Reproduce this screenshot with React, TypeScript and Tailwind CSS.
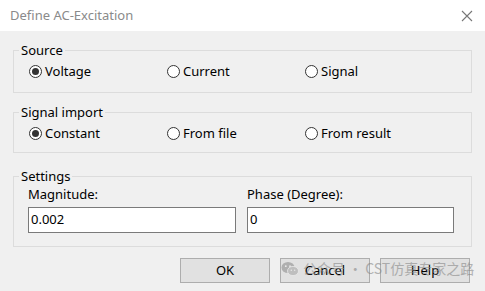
import React from "react";

const font = { fontFamily: '"Noto Sans", "Open Sans", sans-serif' };

function Radio({ label, checked }: { label: string; checked?: boolean }) {
  return (
    <div className="flex items-center h-[18px]">
      <span className="w-[13px] h-[13px] rounded-full border border-[#333] bg-white flex items-center justify-center shrink-0">
        {checked && <span className="w-[7px] h-[7px] rounded-full bg-[#333]" />}
      </span>
      <span className="ml-[3px] text-[13px] text-black leading-[18px]">{label}</span>
    </div>
  );
}

function Group({ title, children, className }: { title: string; children: React.ReactNode; className?: string }) {
  return (
    <fieldset className={"border border-[#dcdcdc] mx-[13px] " + (className ?? "")}>
      <legend className="ml-[5px] px-[2px] text-[13px] leading-[18px] text-black">{title}</legend>
      {children}
    </fieldset>
  );
}

function Btn({ label, w }: { label: string; w: string }) {
  return (
    <div className={"h-[25px] border border-[#adadad] bg-[#e1e1e1] flex items-center justify-center text-[13px] text-black " + w}>
      {label}
    </div>
  );
}

export default function App() {
  return (
    <div className="relative w-[485px] h-[291px] bg-[#f0f0f0] overflow-hidden flex flex-col" style={font}>
      <div className="h-[31px] bg-white flex items-center justify-between pl-[10px] pr-[9px] shrink-0">
        <span className="text-[13px] text-[#8a8a8a]">Define AC-Excitation</span>
        <svg width="12" height="12" viewBox="0 0 12 12" className="mr-[3px]">
          <path d="M1 1 L11 11 M11 1 L1 11" stroke="#777" strokeWidth="1.1" fill="none" />
        </svg>
      </div>

      <Group title="Source" className="mt-[10px] pb-[12px] pt-[3px]">
        <div className="grid grid-cols-[138px_138px_138px] pl-[15px]">
          <Radio label="Voltage" checked />
          <Radio label="Current" />
          <Radio label="Signal" />
        </div>
      </Group>

      <Group title="Signal import" className="mt-[10px] pb-[10px] pt-[3px]">
        <div className="grid grid-cols-[138px_138px_138px] pl-[15px]">
          <Radio label="Constant" checked />
          <Radio label="From file" />
          <Radio label="From result" />
        </div>
      </Group>

      <Group title="Settings" className="mt-[14px] pb-[13px]">
        <div className="grid grid-cols-[208px_207px] gap-x-[11px] pl-[14px] pr-[16px]">
          <div className="flex flex-col">
            <span className="text-[13px] leading-[18px] text-black">Magnitude:</span>
            <div className="mt-[4px] h-[26px] border border-[#7a7a7a] bg-white flex items-center px-[2px] text-[13px] text-black">0.002</div>
          </div>
          <div className="flex flex-col">
            <span className="text-[13px] leading-[18px] text-black">Phase (Degree):</span>
            <div className="mt-[4px] h-[26px] border border-[#7a7a7a] bg-white flex items-center px-[2px] text-[13px] text-black">0</div>
          </div>
        </div>
      </Group>

      <div className="flex justify-end gap-[10px] pr-[15px] mt-[11px]">
        <Btn label="OK" w="w-[90px]" />
        <Btn label="Cancel" w="w-[90px]" />
        <Btn label="Help" w="w-[90px]" />
      </div>

      <div className="absolute left-[281px] top-[258px] flex items-center gap-[4px] opacity-60 pointer-events-none">
        <svg width="18" height="16" viewBox="0 0 18 16">
          <ellipse cx="7" cy="6.5" rx="6.5" ry="5.5" fill="#8f8f8f" />
          <ellipse cx="12" cy="10" rx="5.5" ry="4.6" fill="#a8a8a8" stroke="#f0f0f0" strokeWidth="0.8" />
          <circle cx="4.8" cy="5.2" r="0.9" fill="#f0f0f0" />
          <circle cx="9" cy="5.2" r="0.9" fill="#f0f0f0" />
          <circle cx="10.3" cy="9.2" r="0.7" fill="#f0f0f0" />
          <circle cx="13.7" cy="9.2" r="0.7" fill="#f0f0f0" />
        </svg>
        <span className="text-[14px] text-[#888] whitespace-nowrap" style={{ fontFamily: '"Noto Sans CJK SC", "Noto Sans", sans-serif' }}>
          公众号 · CST仿真专家之路
        </span>
      </div>
    </div>
  );
}
